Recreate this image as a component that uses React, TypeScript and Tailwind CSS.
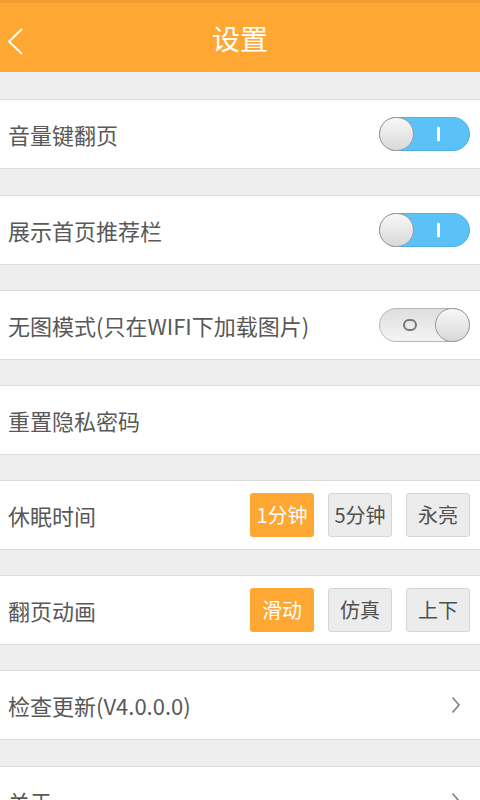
import React from "react";

const font = { fontFamily: '"Noto Sans CJK SC", "Noto Sans", sans-serif' };

function ToggleOn() {
  return (
    <div className="relative w-[91px] h-[34px] rounded-full bg-[#5bc2f7] border border-[#4fb0e6]">
      <div className="absolute left-[57px] top-[9px] w-[3px] h-[14px] bg-white" />
      <div className="absolute left-[-1px] top-[-1px] w-[35px] h-[34px] rounded-full border border-[#9a9a9a] bg-gradient-to-b from-[#f8f8f8] to-[#d8d8d8]" />
    </div>
  );
}

function ToggleOff() {
  return (
    <div className="relative w-[91px] h-[34px] rounded-full bg-gradient-to-b from-[#dedede] to-[#f4f4f4] border border-[#b8b8b8]">
      <div className="absolute left-[23px] top-[10px] w-[14px] h-[12px] rounded-full border-2 border-[#777]" />
      <div className="absolute right-[-1px] top-[-1px] w-[35px] h-[34px] rounded-full border border-[#9a9a9a] bg-gradient-to-b from-[#f8f8f8] to-[#d8d8d8]" />
    </div>
  );
}

function Chevron() {
  return (
    <svg width="10" height="18" viewBox="0 0 10 18" className="mr-[9px]">
      <path d="M1.5 1.5 L8 9 L1.5 16.5" fill="none" stroke="#888" strokeWidth="1.8" />
    </svg>
  );
}

function Btn({ label, active }: { label: string; active?: boolean }) {
  return (
    <div
      className={
        active
          ? "w-[64px] h-[44px] rounded-[3px] bg-[#ffa733] text-white flex items-center justify-center text-[20px]"
          : "w-[64px] h-[44px] rounded-[3px] bg-[#ececec] border border-[#d6d6d6] text-[#505050] flex items-center justify-center text-[20px]"
      }
    >
      {label}
    </div>
  );
}

function Row({ label, right }: { label: string; right?: React.ReactNode }) {
  return (
    <div className="h-[70px] bg-white border-y border-[#dcdcdc] flex items-center justify-between pl-[8px] pr-[10px] shrink-0">
      <span className="text-[22px] text-[#585858] leading-none">{label}</span>
      {right}
    </div>
  );
}

function Gap({ h = "h-[25px]" }: { h?: string }) {
  return <div className={h + " shrink-0"} />;
}

export default function App() {
  return (
    <div className="w-[480px] h-[800px] overflow-hidden bg-[#eeeeee] flex flex-col" style={font}>
      <div className="h-[72px] bg-[#ffa733] shrink-0 flex flex-col">
        <div className="h-[3px] bg-[#f39c30]" />
        <div className="relative flex-1 flex items-center justify-center">
          <svg width="17" height="28" viewBox="0 0 17 28" className="absolute left-[7px] top-[25px]">
            <path d="M15 1 L2 13.5 L15 26" fill="none" stroke="white" strokeWidth="2" />
          </svg>
          <span className="text-white text-[28px] leading-none mt-[1px]">设置</span>
        </div>
      </div>
      <Gap h="h-[27px]" />
      <Row label="音量键翻页" right={<ToggleOn />} />
      <Gap h="h-[26px]" />
      <Row label="展示首页推荐栏" right={<ToggleOn />} />
      <Gap />
      <Row label="无图模式(只在WIFI下加载图片)" right={<ToggleOff />} />
      <Gap />
      <Row label="重置隐私密码" />
      <Gap />
      <Row
        label="休眠时间"
        right={
          <div className="flex gap-[14px]">
            <Btn label="1分钟" active />
            <Btn label="5分钟" />
            <Btn label="永亮" />
          </div>
        }
      />
      <Gap />
      <Row
        label="翻页动画"
        right={
          <div className="flex gap-[14px]">
            <Btn label="滑动" active />
            <Btn label="仿真" />
            <Btn label="上下" />
          </div>
        }
      />
      <Gap />
      <Row label="检查更新(V4.0.0.0)" right={<Chevron />} />
      <Gap h="h-[26px]" />
      <Row label="关于" right={<Chevron />} />
    </div>
  );
}
